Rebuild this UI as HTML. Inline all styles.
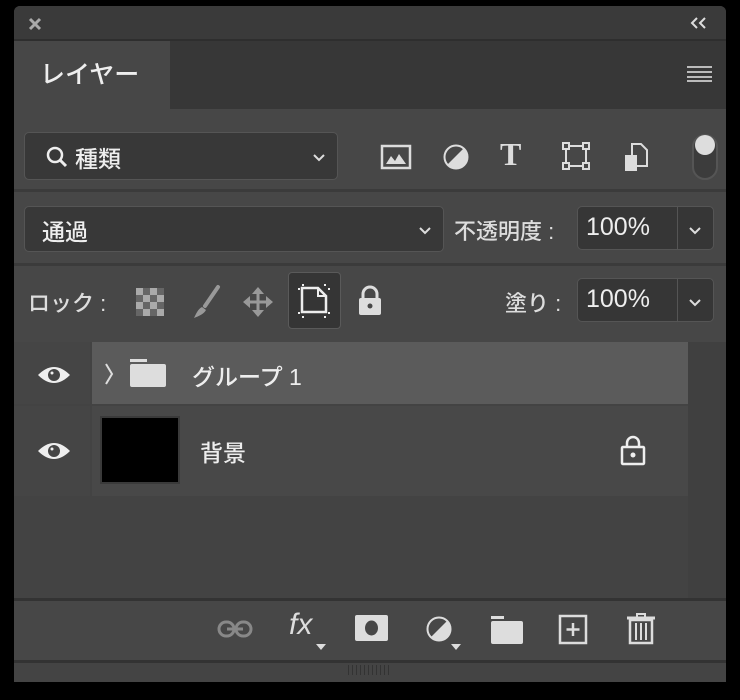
<!DOCTYPE html>
<html><head><meta charset="utf-8"><style>
*{margin:0;padding:0;box-sizing:border-box}
body{width:740px;height:700px;background:#000;position:relative;overflow:hidden;font-family:"Liberation Sans","Noto Sans CJK JP",sans-serif;color:#e8e8e8}
.a{position:absolute}
.box{position:absolute;background:#383838;border:1px solid #555;border-radius:5px}
.t{position:absolute;white-space:nowrap;font-weight:500}
svg{position:absolute;overflow:visible}
</style></head><body>
<div class="a" style="left:14px;top:6px;width:712px;height:676px;background:#474747;border-radius:6px 6px 0 0;overflow:hidden">
 <div class="a" style="left:0;top:0;width:712px;height:33px;background:#3a3a3a"></div>
 <div class="a" style="left:156px;top:33px;width:556px;height:70px;background:#373737"></div>
 <div class="a" style="left:0;top:33px;width:712px;height:2px;background:#2e2e2e"></div>
 <div class="a" style="left:0;top:183px;width:712px;height:3px;background:#3b3b3b"></div>
 <div class="a" style="left:0;top:257px;width:712px;height:3px;background:#3b3b3b"></div>
 <div class="a" style="left:0;top:336px;width:712px;height:256px;background:#434343"></div>
 <div class="a" style="left:0;top:336px;width:76px;height:62px;background:#454545"></div>
 <div class="a" style="left:78px;top:336px;width:596px;height:62px;background:#5b5b5b"></div>
 <div class="a" style="left:0;top:400px;width:76px;height:90px;background:#454545"></div>
 <div class="a" style="left:78px;top:400px;width:596px;height:90px;background:#484848"></div>
 <div class="a" style="left:674px;top:336px;width:38px;height:256px;background:#404040"></div>
 <div class="a" style="left:0;top:592px;width:712px;height:3px;background:#333"></div>
 <div class="a" style="left:0;top:654px;width:712px;height:3px;background:#333"></div>
 <div class="a" style="left:0;top:657px;width:712px;height:19px;background:#444"></div>
 <div class="a" style="left:334px;top:659px;width:42px;height:10px;background:repeating-linear-gradient(90deg,#333 0 1px,transparent 1px 4px)"></div>
</div>
<svg style="left:28px;top:17px" width="14" height="14"><path d="M2 2L12 12M12 2L2 12" stroke="#aaa" stroke-width="3"/></svg>
<svg style="left:690px;top:17px" width="18" height="12"><path d="M7 1L2 6L7 11M15 1L10 6L15 11" stroke="#ddd" stroke-width="2" fill="none"/></svg>
<div class="t" style="left:40px;top:55px;font-size:25px;color:#eee">レイヤー</div>
<svg style="left:687px;top:66px" width="26" height="16"><path d="M0 1H25M0 6H25M0 11H25M0 15H25" stroke="#bbb" stroke-width="2"/></svg>
<div class="box" style="left:24px;top:132px;width:314px;height:48px"></div>
<svg style="left:46px;top:146px" width="24" height="24"><circle cx="9" cy="9" r="7" stroke="#eee" stroke-width="2.5" fill="none"/><path d="M14 14L20 20" stroke="#eee" stroke-width="3"/></svg>
<div class="t" style="left:75px;top:140px;font-size:23px;color:#eee">種類</div>
<svg style="left:313px;top:154px" width="12" height="8"><path d="M1 1L6 6L11 1" stroke="#ddd" stroke-width="2" fill="none"/></svg>
<svg style="left:381px;top:145px" width="30" height="24"><rect x="1" y="1" width="28" height="22" fill="none" stroke="#ddd" stroke-width="2.5"/><path d="M5 19L10 11L14 16L18 9L25 19Z" fill="#ddd"/></svg>
<svg style="left:442px;top:143px" width="28" height="28"><circle cx="14" cy="14" r="12" fill="#ddd"/><path d="M22 5L5 22A12 12 0 0 1 22 5Z" fill="#474747"/><circle cx="14" cy="14" r="11.5" fill="none" stroke="#ddd" stroke-width="2"/></svg>
<div class="t" style="left:500px;top:136px;font-size:32px;font-weight:bold;font-family:'Liberation Serif',serif;color:#ddd">T</div>
<svg style="left:562px;top:142px" width="28" height="28"><rect x="4" y="4" width="20" height="20" fill="none" stroke="#ddd" stroke-width="2"/><g fill="#474747" stroke="#ddd" stroke-width="2"><rect x="1" y="1" width="6" height="6"/><rect x="21" y="1" width="6" height="6"/><rect x="1" y="21" width="6" height="6"/><rect x="21" y="21" width="6" height="6"/></g></svg>
<svg style="left:624px;top:142px" width="26" height="30"><path d="M8 2H17L23 8V24H8Z" fill="none" stroke="#ddd" stroke-width="2"/><rect x="1" y="13" width="12" height="16" fill="#ddd"/></svg>
<div class="a" style="left:692px;top:134px;width:26px;height:46px;border-radius:13px;background:#3c3c3c;border:2px solid #555"></div>
<div class="a" style="left:695px;top:135px;width:20px;height:20px;border-radius:50%;background:#ddd"></div>
<div class="box" style="left:24px;top:206px;width:420px;height:46px"></div>
<div class="t" style="left:42px;top:213px;font-size:23px;color:#eee">通過</div>
<svg style="left:419px;top:227px" width="12" height="8"><path d="M1 1L6 6L11 1" stroke="#ddd" stroke-width="2" fill="none"/></svg>
<div class="t" style="left:454px;top:214px;font-size:22px;color:#ddd">不透明度 :</div>
<div class="box" style="left:577px;top:206px;width:137px;height:44px;background:#363636"></div>
<div class="a" style="left:677px;top:207px;width:1px;height:42px;background:#555"></div>
<div class="t" style="left:586px;top:213px;font-size:25px;color:#eee">100%</div>
<svg style="left:689px;top:227px" width="12" height="8"><path d="M1 1L6 6L11 1" stroke="#ddd" stroke-width="2" fill="none"/></svg>
<div class="t" style="left:28px;top:286px;font-size:22px;color:#ddd">ロック :</div>
<svg style="left:136px;top:288px" width="28" height="28"><rect x="0" y="0" width="28" height="28" fill="#aaa"/><g fill="#666"><rect x="7" y="0" width="7" height="7"/><rect x="21" y="0" width="7" height="7"/><rect x="0" y="7" width="7" height="7"/><rect x="14" y="7" width="7" height="7"/><rect x="7" y="14" width="7" height="7"/><rect x="21" y="14" width="7" height="7"/><rect x="0" y="21" width="7" height="7"/><rect x="14" y="21" width="7" height="7"/></g></svg>
<svg style="left:188px;top:284px" width="36" height="36"><path d="M30 3L17 22" stroke="#999" stroke-width="4" stroke-linecap="round"/><path d="M14 23C10 25 8 30 6 34C11 32 16 30 18 26Z" fill="#999"/></svg>
<svg style="left:242px;top:286px" width="32" height="32"><path d="M16 3V29M3 16H29" stroke="#999" stroke-width="3"/><path d="M16 1L10 8H22ZM16 31L10 24H22ZM1 16L8 10V22ZM31 16L24 10V22Z" fill="#999"/></svg>
<div class="a" style="left:288px;top:272px;width:53px;height:57px;border-radius:4px;background:#353535;border:1px solid #5a5a5a"></div>
<svg style="left:298px;top:284px" width="36" height="34"><path d="M4 4H20L28 12V28H4Z" fill="none" stroke="#eee" stroke-width="2.5"/><path d="M20 4V12H28" fill="none" stroke="#eee" stroke-width="2"/><g fill="#eee"><rect x="0" y="4" width="2" height="2"/><rect x="4" y="0" width="2" height="2"/><rect x="30" y="4" width="2" height="2"/><rect x="26" y="0" width="2" height="2"/><rect x="0" y="28" width="2" height="2"/><rect x="4" y="32" width="2" height="2"/><rect x="30" y="28" width="2" height="2"/><rect x="26" y="32" width="2" height="2"/></g></svg>
<svg style="left:357px;top:285px" width="26" height="32"><path d="M6 14V9A7 7 0 0 1 20 9V14" fill="none" stroke="#ddd" stroke-width="3"/><rect x="2" y="13" width="22" height="17" rx="2" fill="#ddd"/><circle cx="13" cy="21" r="2.5" fill="#474747"/></svg>
<div class="t" style="left:505px;top:286px;font-size:22px;color:#ddd">塗り :</div>
<div class="box" style="left:577px;top:278px;width:137px;height:44px;background:#363636"></div>
<div class="a" style="left:677px;top:279px;width:1px;height:42px;background:#555"></div>
<div class="t" style="left:586px;top:285px;font-size:25px;color:#eee">100%</div>
<svg style="left:689px;top:299px" width="12" height="8"><path d="M1 1L6 6L11 1" stroke="#ddd" stroke-width="2" fill="none"/></svg>
<svg style="left:37px;top:365px" width="34" height="20"><path d="M1 10Q17 -6 33 10Q17 26 1 10Z" fill="#eee"/><circle cx="17" cy="10" r="6" fill="#454545"/><circle cx="15" cy="8" r="1.5" fill="#eee"/></svg>
<svg style="left:37px;top:441px" width="34" height="20"><path d="M1 10Q17 -6 33 10Q17 26 1 10Z" fill="#eee"/><circle cx="17" cy="10" r="6" fill="#454545"/><circle cx="15" cy="8" r="1.5" fill="#eee"/></svg>
<svg style="left:104px;top:363px" width="10" height="22"><path d="M2 1L8 11L2 21" stroke="#ddd" stroke-width="2" fill="none"/></svg>
<svg style="left:129px;top:358px" width="38" height="30"><rect x="1" y="1" width="17" height="3" fill="#ddd"/><rect x="1" y="6" width="36" height="23" rx="2" fill="#ddd"/></svg>
<div class="t" style="left:192px;top:358px;font-size:23px;color:#eee">グループ 1</div>
<div class="a" style="left:100px;top:416px;width:80px;height:68px;background:#000;border:2px solid #3a3a3a"></div>
<div class="t" style="left:200px;top:434px;font-size:23px;color:#eee">背景</div>
<svg style="left:619px;top:434px" width="28" height="32"><path d="M8 13V9A6 6 0 0 1 20 9V13" fill="none" stroke="#eee" stroke-width="2.5"/><rect x="3" y="13" width="22" height="17" rx="1" fill="none" stroke="#eee" stroke-width="2.5"/><circle cx="14" cy="21" r="2.5" fill="#eee"/></svg>
<svg style="left:217px;top:617px" width="38" height="24"><rect x="2" y="5" width="15" height="14" rx="7" fill="none" stroke="#888" stroke-width="3"/><rect x="19" y="5" width="15" height="14" rx="7" fill="none" stroke="#888" stroke-width="3"/><path d="M10 12H26" stroke="#888" stroke-width="3"/></svg>
<div class="t" style="left:289px;top:608px;font-size:30px;font-style:italic;font-weight:normal;color:#ddd">fx</div>
<svg style="left:316px;top:644px" width="12" height="8"><path d="M0 0H10L5 6Z" fill="#ddd"/></svg>
<svg style="left:355px;top:615px" width="34" height="28"><rect x="0" y="0" width="33" height="26" rx="2" fill="#ddd"/><ellipse cx="16.5" cy="13" rx="6.5" ry="7.5" fill="#474747"/></svg>
<svg style="left:424px;top:614px" width="30" height="30"><circle cx="15" cy="15" r="12" fill="#ddd"/><path d="M24 6L6 24A12 12 0 0 1 24 6Z" fill="#474747"/><circle cx="15" cy="15" r="11.5" fill="none" stroke="#ddd" stroke-width="2"/></svg>
<svg style="left:451px;top:644px" width="12" height="8"><path d="M0 0H10L5 6Z" fill="#ddd"/></svg>
<svg style="left:490px;top:615px" width="34" height="30"><rect x="1" y="1" width="13" height="3" fill="#ddd"/><rect x="1" y="6" width="32" height="23" rx="2" fill="#ddd"/></svg>
<svg style="left:558px;top:614px" width="30" height="32"><rect x="2" y="2" width="26" height="27" fill="none" stroke="#ddd" stroke-width="2.5"/><path d="M15 9V22M8.5 15.5H21.5" stroke="#ddd" stroke-width="2.5"/></svg>
<svg style="left:626px;top:612px" width="30" height="34"><path d="M1 6H29" stroke="#ddd" stroke-width="3"/><path d="M11 5V2H19V5" fill="none" stroke="#ddd" stroke-width="2"/><path d="M4 8H26V31H4Z" fill="none" stroke="#ddd" stroke-width="2.5"/><path d="M10 11V28M15 11V28M20 11V28" stroke="#ddd" stroke-width="2"/></svg>
</body></html>
